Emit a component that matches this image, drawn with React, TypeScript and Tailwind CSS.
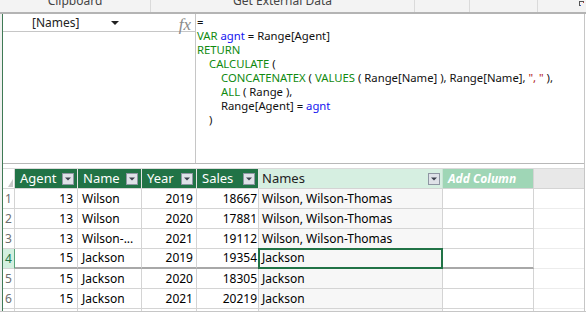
import React from 'react';

type Row = { n: number; agent: number; name: string; year: number; sales: number; names: string };

const rows: Row[] = [
  { n: 1, agent: 13, name: 'Wilson', year: 2019, sales: 18667, names: 'Wilson, Wilson-Thomas' },
  { n: 2, agent: 13, name: 'Wilson', year: 2020, sales: 17881, names: 'Wilson, Wilson-Thomas' },
  { n: 3, agent: 13, name: 'Wilson-...', year: 2021, sales: 19112, names: 'Wilson, Wilson-Thomas' },
  { n: 4, agent: 15, name: 'Jackson', year: 2019, sales: 19354, names: 'Jackson' },
  { n: 5, agent: 15, name: 'Jackson', year: 2020, sales: 18305, names: 'Jackson' },
  { n: 6, agent: 15, name: 'Jackson', year: 2021, sales: 20219, names: 'Jackson' },
];

function FilterButton() {
  return (
    <div className="w-[12px] h-[12px] shrink-0 bg-[#dfe2e8] border border-[#8f96a3] flex items-center justify-center">
      <svg width="6" height="4" viewBox="0 0 6 4">
        <path d="M0 0.5h6L3 3.5z" fill="#3a3f4a" />
      </svg>
    </div>
  );
}

function K({ children }: { children: React.ReactNode }) {
  return <span className="text-[#108a10]">{children}</span>;
}

function V({ children }: { children: React.ReactNode }) {
  return <span className="text-[#1515f0]">{children}</span>;
}

export default function App() {
  return (
    <div className="w-[586px] h-[313px] bg-white overflow-hidden font-['Noto_Sans',sans-serif] text-black">
      {/* ribbon strip, cut off at the top */}
      <div className="h-[14px] bg-[#f3f3f3] border-b-2 border-[#b4b4b4] flex overflow-hidden text-[12px] text-[#444] leading-none">
        <div className="w-[151px] border-r border-[#dadada] flex justify-center">
          <span className="-mt-[5px]">Clipboard</span>
        </div>
        <div className="w-[264px] border-r border-[#dadada] flex justify-center">
          <span className="-mt-[5px]">Get External Data</span>
        </div>
        <div className="w-[55px] border-r border-[#dadada]" />
        <div className="w-[68px] border-r border-[#dadada]" />
        <div className="flex-1 flex justify-end pr-[2px] pt-[1px]">
          <svg width="5" height="5" viewBox="0 0 5 5">
            <path d="M0 0h5v1H1v4H0z" fill="#555" />
            <rect x="4" y="1" width="1" height="1" fill="#c04040" />
            <rect x="1" y="4" width="1" height="1" fill="#4060c0" />
          </svg>
        </div>
      </div>

      <div className="flex h-[298px] border-b border-[#c6c6c6]">
        <div className="w-[2px] bg-[#f1f1f1]" />
        <div className="w-[583px] border-l border-r border-l-[#3f7a55] border-r-[#c6c6c6] flex flex-col overflow-hidden">
          {/* formula bar */}
          <div className="h-[150px] shrink-0 flex border-b border-[#b8b8b8]">
            <div className="w-[193px] border-r border-[#c6c6c6] flex flex-col">
              <div className="h-[18px] border-b border-[#c6c6c6] flex items-center relative">
                <span className="ml-[29px] text-[12px] text-[#222]">[Names]</span>
                <svg className="ml-[32px]" width="8" height="4" viewBox="0 0 8 4">
                  <path d="M0 0h8L4 4z" fill="#222" />
                </svg>
                <span className="absolute right-[4px] top-[-2px] font-['Liberation_Serif',serif] italic text-[17px] text-[#8a8a8a]">
                  fx
                </span>
              </div>
            </div>
            <div className="flex-1 pl-[1px] pt-[1px] text-[11.3px] leading-[14px] whitespace-pre text-[#111]">
              <div>=</div>
              <div>
                <K>VAR</K> <V>agnt</V> = Range[Agent]
              </div>
              <div>
                <K>RETURN</K>
              </div>
              <div className="pl-[12px]">
                <K>CALCULATE</K> (
              </div>
              <div className="pl-[24px]">
                <K>CONCATENATEX</K> ( <K>VALUES</K> ( Range[Name] ), Range[Name], <span className="text-[#b02020]">", "</span> ),
              </div>
              <div className="pl-[24px]">
                <K>ALL</K> ( Range ),
              </div>
              <div className="pl-[24px]">
                Range[Agent] = <V>agnt</V>
              </div>
              <div className="pl-[12px]">)</div>
            </div>
          </div>

          {/* table */}
          <div className="mt-[4px] shrink-0 text-[12px]">
            <div className="flex h-[21px] border-t border-[#dadada]">
              <div className="w-[12px] border-r border-b border-[#d4d4d4] bg-white flex items-end justify-end pr-[1px] pb-[1px]">
                <svg width="5" height="8" viewBox="0 0 5 8">
                  <path d="M5 0v8H0z" fill="#c8c8c8" />
                </svg>
              </div>
              {[
                { label: 'Agent', w: 'w-[63px]' },
                { label: 'Name', w: 'w-[64px]' },
                { label: 'Year', w: 'w-[55px]' },
                { label: 'Sales', w: 'w-[62px]' },
              ].map((c) => (
                <div
                  key={c.label}
                  className={`${c.w} bg-[#217346] text-white border-r border-r-[#e6e6e6] border-b border-b-[#d4d4d4] flex items-center justify-between pl-[5px] pr-[3px] text-[13px]`}
                >
                  <span>{c.label}</span>
                  <FilterButton />
                </div>
              ))}
              <div className="w-[184px] bg-[#d6efe1] text-[#222] border-r border-r-[#c9e3d4] border-b border-b-[#d4d4d4] flex items-center justify-between pl-[3px] pr-[2px] text-[13px]">
                <span>Names</span>
                <FilterButton />
              </div>
              <div className="w-[91px] bg-[#9fd6b6] text-white italic font-bold border-r border-r-[#d4d4d4] border-b border-b-[#d4d4d4] flex items-center pl-[5px] text-[12px]">
                Add Column
              </div>
              <div className="flex-1 bg-[#e8e8e8] border-b border-[#d4d4d4]" />
            </div>

            {[...rows, null].map((r, i) => {
              if (!r) {
                return (
                  <div key={i} className="flex h-[20px]">
                    <div className="w-[12px] border-r border-[#d4d4d4]" />
                    <div className="w-[63px] border-r border-[#d4d4d4]" />
                    <div className="w-[64px] border-r border-[#d4d4d4]" />
                    <div className="w-[55px] border-r border-[#d4d4d4]" />
                    <div className="w-[62px] border-r border-[#d4d4d4]" />
                    <div className="w-[184px] border-r border-[#d4d4d4] bg-[#f7f7f7]" />
                    <div className="w-[91px] border-r border-[#d4d4d4]" />
                  </div>
                );
              }
              const sel = r.n === 4;
              const b = sel ? 'border-b-2 border-b-[#a8a8a8]' : 'border-b border-b-[#d4d4d4]';
              return (
                <div key={i} className="flex h-[20px]">
                  <div
                    className={`w-[12px] border-b border-b-[#d4d4d4] border-r flex items-center pl-[2px] ${
                      sel ? 'bg-[#d3f0df] text-[#217346] border-r-[#5aa57a]' : 'text-[#6e6e6e] border-r-[#d4d4d4]'
                    }`}
                  >
                    {r.n}
                  </div>
                  <div className={`w-[63px] border-r border-r-[#d4d4d4] ${b} flex items-center justify-end pr-[4px]`}>
                    {r.agent}
                  </div>
                  <div className={`w-[64px] border-r border-r-[#d4d4d4] ${b} flex items-center pl-[4px]`}>{r.name}</div>
                  <div className={`w-[55px] border-r border-r-[#d4d4d4] ${b} flex items-center justify-end pr-[3px]`}>
                    {r.year}
                  </div>
                  <div className={`w-[62px] border-r border-r-[#d4d4d4] ${b} flex items-center justify-end pr-[1px]`}>
                    {r.sales}
                  </div>
                  <div className={`w-[184px] border-r border-r-[#d4d4d4] ${b} bg-[#f7f7f7] flex items-center pl-[3px] relative`}>
                    {r.names}
                    {sel && <div className="absolute -top-px -left-px right-[-1px] bottom-[-2px] border-2 border-[#217346]" />}
                  </div>
                  <div className={`w-[91px] border-r border-r-[#d4d4d4] ${b}`} />
                  <div className="flex-1 border-b border-b-[#ececec]" />
                </div>
              );
            })}
          </div>
        </div>
      </div>
    </div>
  );
}
